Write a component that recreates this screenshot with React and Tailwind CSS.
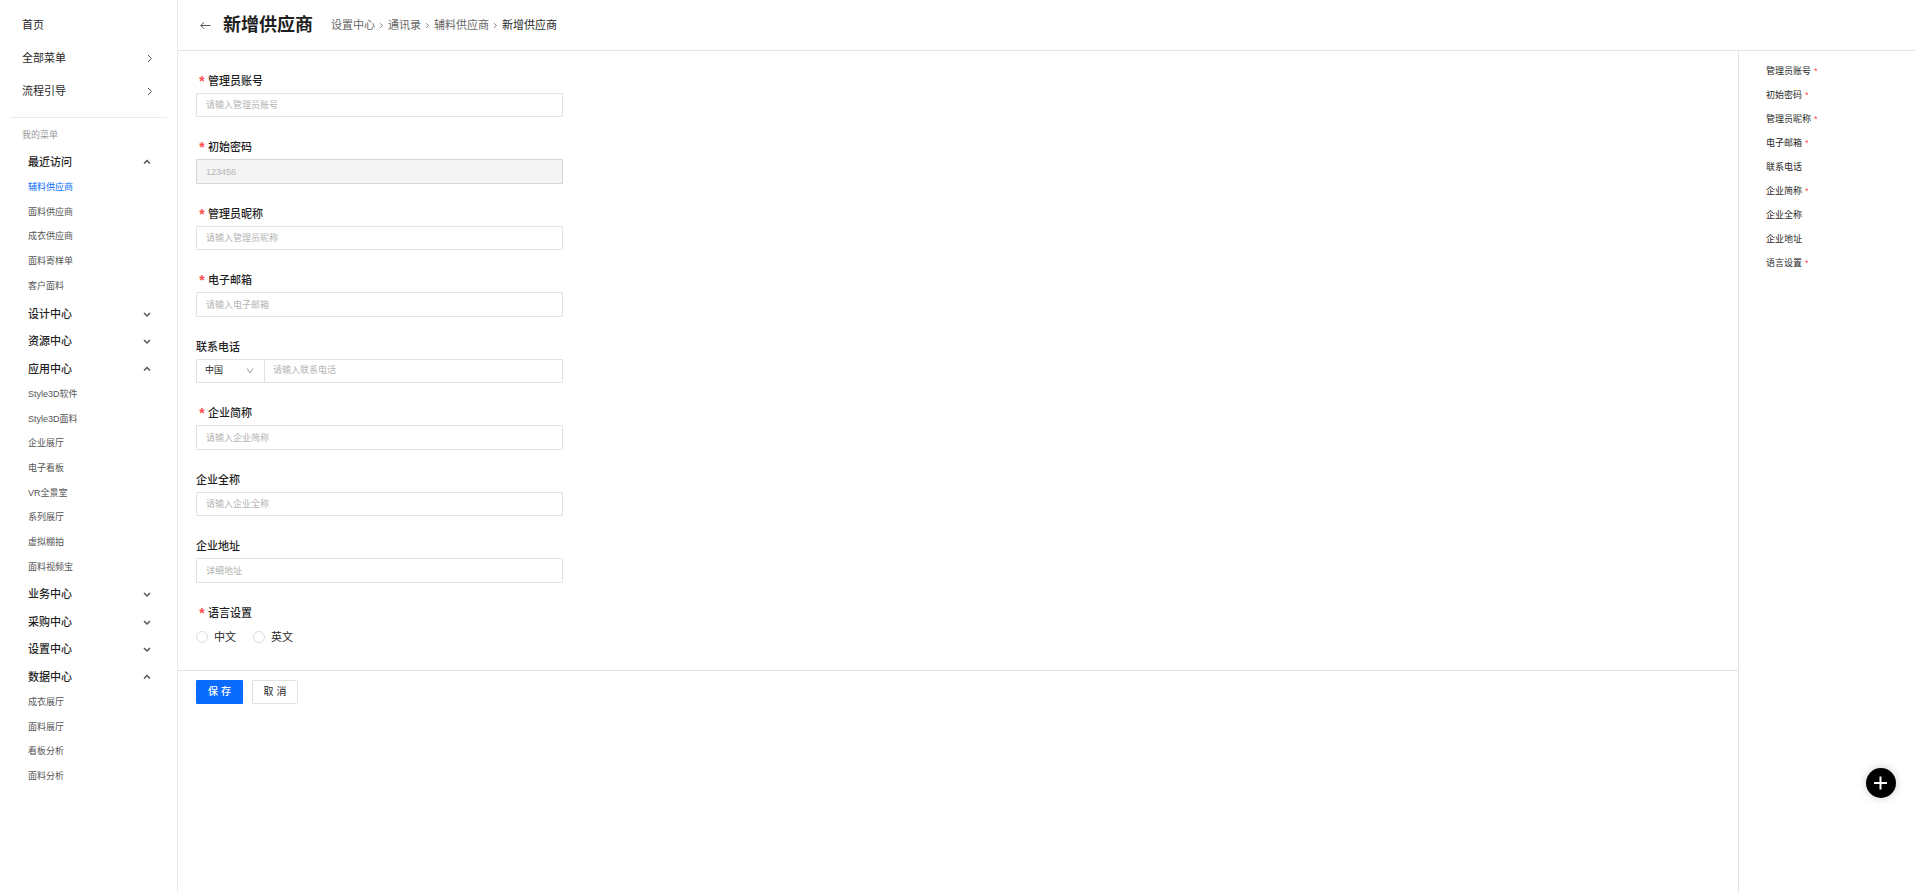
import React, { useState } from 'react';

const initialGroups = [
  {
    title: '最近访问',
    open: true,
    items: ['辅料供应商', '面料供应商', '成衣供应商', '面料寄样单', '客户面料'],
  },
  { title: '设计中心', open: false, items: [] },
  { title: '资源中心', open: false, items: [] },
  {
    title: '应用中心',
    open: true,
    items: [
      'Style3D软件',
      'Style3D面料',
      '企业展厅',
      '电子看板',
      'VR全景室',
      '系列展厅',
      '虚拟棚拍',
      '面料视频宝',
    ],
  },
  { title: '业务中心', open: false, items: [] },
  { title: '采购中心', open: false, items: [] },
  { title: '设置中心', open: false, items: [] },
  { title: '数据中心', open: true, items: ['成衣展厅', '面料展厅', '看板分析', '面料分析'] },
];

const fields = [
  { id: 'account', label: '管理员账号', required: true, placeholder: '请输入管理员账号' },
  { id: 'password', label: '初始密码', required: true, placeholder: '123456', disabled: true },
  { id: 'nickname', label: '管理员昵称', required: true, placeholder: '请输入管理员昵称' },
  { id: 'email', label: '电子邮箱', required: true, placeholder: '请输入电子邮箱' },
  { id: 'phone', label: '联系电话', placeholder: '请输入联系电话' },
  { id: 'shortName', label: '企业简称', required: true, placeholder: '请输入企业简称' },
  { id: 'fullName', label: '企业全称', placeholder: '请输入企业全称' },
  { id: 'address', label: '企业地址', placeholder: '详细地址' },
  { id: 'language', label: '语言设置', required: true },
];

const Chevron = ({ d, className }) => (
  <svg viewBox="0 0 10 10" fill="none" stroke="currentColor" className={className} aria-hidden="true">
    <path d={d} />
  </svg>
);

const Sidebar = () => {
  const [groups, setGroups] = useState(initialGroups);
  const [active, setActive] = useState('辅料供应商');

  const toggle = (title) => {
    setGroups((prev) => prev.map((g) => (g.title === title ? { ...g, open: !g.open } : g)));
  };

  return (
    <aside className="w-[178px] shrink-0 border-r border-[#ebebeb]">
      <nav className="mx-[10px] border-b border-[#ebebeb] py-[9px] text-[11px]">
        <a href="#home" className="flex h-[33px] items-center px-3">首页</a>
        {['全部菜单', '流程引导'].map((name) => (
          <a key={name} href="#menu" className="flex h-[33px] items-center justify-between px-3">
            {name}
            <Chevron d="M3 1 L6.5 4.5 L3 8" className="size-[10px] text-[#555]" />
          </a>
        ))}
      </nav>
      <p className="mt-[10px] mb-[7px] pl-[22px] text-[9px] leading-[14px] text-[#999]">我的菜单</p>
      {groups.map((group) => (
        <section key={group.title} className="odd:pb-px">
          <button
            type="button"
            aria-expanded={group.open}
            onClick={() => toggle(group.title)}
            className="flex h-[27px] w-full items-center justify-between pr-[25px] pl-7 text-[11px] font-medium"
          >
            {group.title}
            <Chevron
              d={group.open ? 'M2 5.5 L5 2.5 L8 5.5' : 'M2 3 L5 6 L8 3'}
              className="size-[10px] stroke-[1.5] text-[#555]"
            />
          </button>
          {group.open && (
            <ul className="-mt-px pb-px">
              {group.items.map((item) => (
                <li key={item} className="h-[25px] text-[9px] nth-[3n]:h-6">
                  <a
                    href="#page"
                    onClick={() => setActive(item)}
                    className={`flex h-full items-center pl-7 ${active === item ? 'text-[#0a6cff]' : 'text-[#555]'}`}
                  >
                    {item}
                  </a>
                </li>
              ))}
            </ul>
          )}
        </section>
      ))}
    </aside>
  );
};

const Header = () => (
  <header className="flex h-[51px] items-center border-b border-[#e4e4e4] pl-[22px]">
    <button type="button" aria-label="返回" className="mr-3 text-[#555]">
      <svg viewBox="0 0 11 11" fill="none" stroke="currentColor" className="size-[11px]">
        <path d="M10.5 5.5 H0.8 M4 2.2 L0.8 5.5 L4 8.8" />
      </svg>
    </button>
    <h1 className="text-[18px] leading-6 font-bold">新增供应商</h1>
    <nav className="ml-[18px] flex items-center text-[11px] text-[#666]">
      {['设置中心', '通讯录', '辅料供应商'].map((name) => (
        <React.Fragment key={name}>
          <a href="#crumb">{name}</a>
          <span className="flex w-[13px] justify-center">
            <Chevron d="M3.5 2.5 L6 5 L3.5 7.5" className="size-[9px]" />
          </span>
        </React.Fragment>
      ))}
      <span className="text-[#1f1f1f]">新增供应商</span>
    </nav>
  </header>
);

const FieldInput = ({ field }) => (
  <input
    id={field.id}
    type="text"
    placeholder={field.placeholder}
    disabled={field.disabled}
    className="block h-6 w-full min-w-0 rounded-[1px] border border-[#e2e2e2] px-[9px] text-[9px] outline-none placeholder:text-[#b4b4b4] group-even:h-[25px] disabled:border-[#d6d6d6] disabled:bg-[#f4f4f4]"
  />
);

const PhoneInput = ({ field }) => (
  <div className="flex h-6 rounded-[1px] border border-[#e2e2e2] text-[9px]">
    <div className="relative w-[68px] border-r border-[#e2e2e2]">
      <select aria-label="国家" className="block h-full w-full appearance-none pl-2 outline-none">
        <option>中国</option>
      </select>
      <Chevron
        d="M2 2.5 L5 7 L8 2.5"
        className="pointer-events-none absolute top-[6px] right-[9px] size-[10px] text-[#999]"
      />
    </div>
    <input
      id={field.id}
      type="tel"
      placeholder={field.placeholder}
      className="block min-w-0 flex-1 px-2 outline-none placeholder:text-[#b4b4b4]"
    />
  </div>
);

const LanguageRadios = () => (
  <div role="radiogroup" aria-labelledby="language-label" className="flex h-6 items-center gap-[17px] text-[11px]">
    {['中文', '英文'].map((name) => (
      <label key={name} className="flex items-center gap-[6px]">
        <input
          type="radio"
          name="language"
          value={name}
          className="size-3 appearance-none rounded-full border border-[#dcdcdc] checked:border-4 checked:border-[#0a6cff]"
        />
        {name}
      </label>
    ))}
  </div>
);

const Label = ({ field }) => {
  const content = (
    <>
      {field.required && (
        <span className="w-3 pt-1 text-center font-['Liberation_Mono'] text-[14px] leading-5 font-bold text-[#ff4d4f]">*</span>
      )}
      {field.label}
    </>
  );
  const className = 'flex h-6 items-center text-[11px] font-medium';

  if (field.id === 'language') {
    return <div id="language-label" className={className}>{content}</div>;
  }
  return <label htmlFor={field.id} className={className}>{content}</label>;
};

const SupplierForm = () => (
  <form onSubmit={(e) => e.preventDefault()}>
    <div className="border-b border-[#e4e4e4] px-[18px] pt-[18px] pb-[3px]">
      {fields.map((field) => (
        <div key={field.id} className="group mb-[18px] max-w-[367px]">
          <Label field={field} />
          {field.id === 'phone' && <PhoneInput field={field} />}
          {field.id === 'language' && <LanguageRadios />}
          {field.id !== 'phone' && field.id !== 'language' && <FieldInput field={field} />}
        </div>
      ))}
    </div>
    <div className="flex gap-[9px] px-[18px] pt-[9px] text-[10px]">
      <button type="submit" className="h-6 w-[47px] rounded-[1px] bg-[#0a6cff] pb-[2px] font-medium text-white">保 存</button>
      <button type="button" className="h-6 w-[46px] rounded-[1px] border border-[#e2e2e2] pb-[2px]">取 消</button>
    </div>
  </form>
);

const App = () => (
  <div className="flex min-h-screen bg-white font-['Liberation_Sans','Noto_Sans_CJK_SC',sans-serif] text-[#1f1f1f]">
    <Sidebar />
    <div className="flex min-w-0 flex-1 flex-col">
      <Header />
      <div className="flex flex-1">
        <main className="min-w-0 flex-1">
          <SupplierForm />
        </main>
        <aside className="w-[177px] shrink-0 border-l border-[#e4e4e4] pt-[9px] pl-[27px] text-[9px]">
          {fields.map((field) => (
            <a key={field.id} href={`#${field.id}`} className="flex h-6 items-center gap-[3px]">
              {field.label}
              {field.required && <span className="text-[#ff4d4f]">*</span>}
            </a>
          ))}
        </aside>
      </div>
    </div>
    <button
      type="button"
      aria-label="新增"
      className="fixed right-[19px] bottom-[95px] flex size-[30px] items-center justify-center rounded-full bg-black text-white shadow-[0_0_10px_rgba(0,0,0,0.2)]"
    >
      <svg viewBox="0 0 14 14" stroke="currentColor" strokeWidth="2" className="size-[14px]">
        <path d="M6.5 0.5 V13.5 M0 7 H13" />
      </svg>
    </button>
  </div>
);

export default App;
